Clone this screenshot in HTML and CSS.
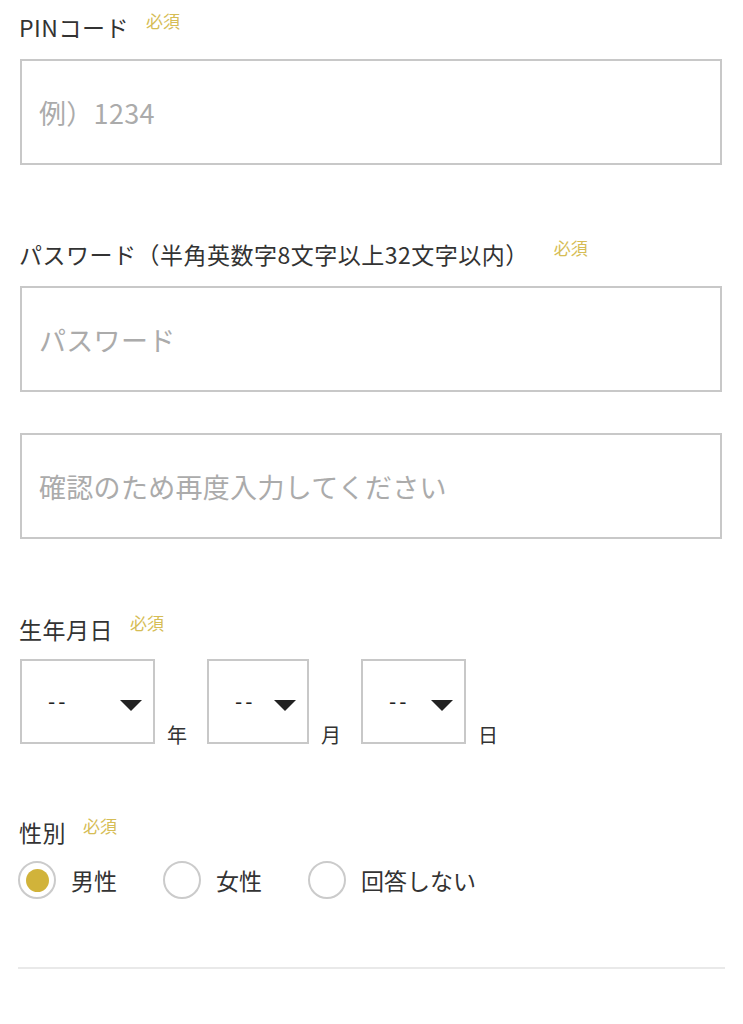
FILE: index.html
```html
<!DOCTYPE html>
<html lang="ja">
<head>
    <meta charset="UTF-8">
    <meta name="viewport" content="width=device-width, initial-scale=1.0">
    <title>会員登録</title>
    <link rel="stylesheet" href="styles.css">
</head>
<body>
    <form class="form">
        <div class="field field-pin">
            <div class="label-row">
                <label class="label" for="pin">PINコード</label>
                <span class="required">必須</span>
            </div>
            <input class="text-input" type="text" id="pin" placeholder="例）1234">
        </div>

        <div class="field field-password">
            <div class="label-row">
                <label class="label" for="password">パスワード（半角英数字8文字以上32文字以内）</label>
                <span class="required">必須</span>
            </div>
            <input class="text-input" type="password" id="password" placeholder="パスワード">
            <input class="text-input confirm" type="password" id="password_confirm" placeholder="確認のため再度入力してください">
        </div>

        <div class="field field-birth">
            <div class="label-row">
                <span class="label">生年月日</span>
                <span class="required">必須</span>
            </div>
            <div class="birth-row">
                <div class="select-box year">
                    <select name="year"><option>--</option></select>
                    <span class="arrow"></span>
                </div>
                <span class="unit">年</span>
                <div class="select-box month">
                    <select name="month"><option>--</option></select>
                    <span class="arrow"></span>
                </div>
                <span class="unit">月</span>
                <div class="select-box day">
                    <select name="day"><option>--</option></select>
                    <span class="arrow"></span>
                </div>
                <span class="unit">日</span>
            </div>
        </div>

        <div class="field field-gender">
            <div class="label-row">
                <span class="label">性別</span>
                <span class="required">必須</span>
            </div>
            <div class="radio-row">
                <label class="radio checked"><span class="circle"></span>男性</label>
                <label class="radio"><span class="circle"></span>女性</label>
                <label class="radio"><span class="circle"></span>回答しない</label>
            </div>
        </div>

        <hr class="divider">
    </form>
</body>
</html>
```

FILE: styles.css
```css
body {
    font-family: "Noto Sans CJK JP", "Noto Sans", sans-serif;
    margin: 0;
    padding: 0;
    background-color: #fff;
    color: #333;
}
.form {
    padding: 11px 21px 0 20px;
}
.label-row {
    display: flex;
    align-items: flex-start;
}
.label {
    font-size: 23px;
    line-height: 32px;
    letter-spacing: 0.5px;
    margin-left: -1px;
}
.required {
    font-size: 17px;
    line-height: 22px;
    color: #d6bd55;
    margin-left: 17px;
    margin-top: -1px;
}
.field-password .required {
    margin-left: 25px;
}
.text-input {
    display: block;
    width: 100%;
    height: 106px;
    margin-top: 16px;
    padding: 0 17px;
    border: 2px solid #c8c8c8;
    border-radius: 0;
    box-sizing: border-box;
    font-family: inherit;
    font-size: 27px;
    letter-spacing: 0.3px;
    color: #333;
    background: #fff;
    outline: none;
}
.text-input::placeholder {
    color: #ababab;
}
.text-input.confirm {
    margin-top: 41px;
}
.field-password {
    margin-top: 73px;
}
.field-birth {
    margin-top: 74px;
}
.birth-row {
    display: flex;
    align-items: flex-end;
    margin-top: 14px;
}
.select-box {
    position: relative;
    height: 85px;
    border: 2px solid #c8c8c8;
    box-sizing: border-box;
}
.select-box.year { width: 135px; }
.select-box.month { width: 102px; }
.select-box.day { width: 105px; }
.select-box select {
    appearance: none;
    -webkit-appearance: none;
    width: 100%;
    height: 100%;
    border: none;
    background: transparent;
    padding: 0 0 0 26px;
    font-family: "DejaVu Sans", sans-serif;
    font-size: 20px;
    letter-spacing: 3px;
    color: #222;
    outline: none;
}
.arrow {
    position: absolute;
    right: 11px;
    top: 39px;
    width: 0;
    height: 0;
    border-left: 11px solid transparent;
    border-right: 11px solid transparent;
    border-top: 11px solid #222;
    pointer-events: none;
}
.unit {
    font-size: 20px;
    line-height: 20px;
    margin: 0 20px 0 12px;
    position: relative;
    top: 1px;
}
.field-gender {
    margin-top: 72px;
}
.radio-row {
    display: flex;
    align-items: center;
    margin-top: 13px;
    margin-left: -2px;
}
.radio {
    display: flex;
    align-items: center;
    font-size: 23px;
    line-height: 38px;
    margin-right: 46px;
}
.circle {
    width: 38px;
    height: 38px;
    border: 2px solid #cbcbcb;
    border-radius: 50%;
    box-sizing: border-box;
    margin-right: 15px;
    display: flex;
    align-items: center;
    justify-content: center;
}
.radio.checked .circle::after {
    content: "";
    width: 23px;
    height: 23px;
    border-radius: 50%;
    background-color: #d1b33a;
}
.divider {
    border: none;
    border-top: 2px solid #e9e9e9;
    margin: 68px -3px 0 -2px;
}
```
